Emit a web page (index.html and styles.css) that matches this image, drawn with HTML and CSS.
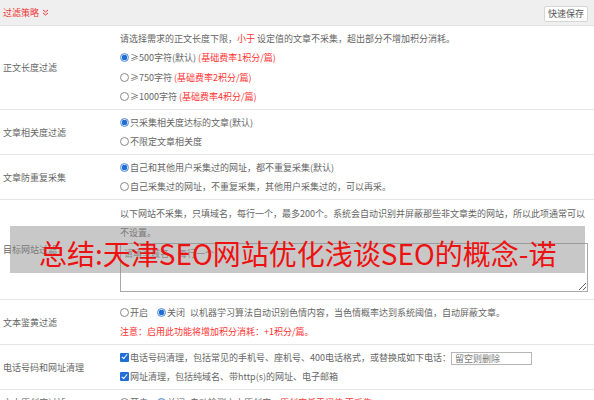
FILE: index.html
```html
<!DOCTYPE html>
<html lang="zh-CN">
<head>
<meta charset="utf-8">
<title>过滤策略</title>
<link rel="stylesheet" href="styles.css">
</head>
<body>
<div class="panel">
  <div class="head">
    <span class="title">过滤策略
      <svg class="chev" width="7" height="7" viewBox="0 0 7 7"><path d="M1 1 L3.5 3 L6 1 M1 4 L3.5 6 L6 4" fill="none" stroke="#e33" stroke-width="1"/></svg>
    </span>
    <button class="save">快速保存</button>
  </div>

  <div class="row">
    <div class="label">正文长度过滤</div>
    <div class="field">
      <div class="line">请选择需求的正文长度下限，<span class="red">小于</span> 设定值的文章不采集，超出部分不增加积分消耗。</div>
      <label class="line"><input type="radio" name="len" checked>≥500字符(默认) <span class="red">(基础费率1积分/篇)</span></label>
      <label class="line"><input type="radio" name="len">≥750字符 <span class="red">(基础费率2积分/篇)</span></label>
      <label class="line"><input type="radio" name="len">≥1000字符 <span class="red">(基础费率4积分/篇)</span></label>
    </div>
  </div>

  <div class="row">
    <div class="label">文章相关度过滤</div>
    <div class="field">
      <label class="line"><input type="radio" name="rel" checked>只采集相关度达标的文章(默认)</label>
      <label class="line"><input type="radio" name="rel">不限定文章相关度</label>
    </div>
  </div>

  <div class="row">
    <div class="label">文章防重复采集</div>
    <div class="field">
      <label class="line"><input type="radio" name="dup" checked>自己和其他用户采集过的网址，都不重复采集(默认)</label>
      <label class="line"><input type="radio" name="dup">自己采集过的网址，不重复采集，其他用户采集过的，可以再采。</label>
    </div>
  </div>

  <div class="row">
    <div class="label">目标网站过滤</div>
    <div class="field">
      <div class="para">以下网站不采集，只填域名，每行一个，最多200个。系统会自动识别并屏蔽那些非文章类的网站，所以此项通常可以不设置。</div>
      <textarea class="area" placeholder="请填写域名，每行一个"></textarea>
    </div>
  </div>

  <div class="row">
    <div class="label">文本鉴黄过滤</div>
    <div class="field">
      <div class="line"><label class="opt"><input type="radio" name="porn">开启</label><label class="opt opt-b"><input type="radio" name="porn" checked>关闭</label>以机器学习算法自动识别色情内容，当色情概率达到系统阈值，自动屏蔽文章。</div>
      <div class="line red">注意：启用此功能将增加积分消耗：+1积分/篇。</div>
    </div>
  </div>

  <div class="row">
    <div class="label">电话号码和网址清理</div>
    <div class="field">
      <label class="line"><input type="checkbox" checked>电话号码清理，包括常见的手机号、座机号、400电话格式，或替换成如下电话：<input class="phone" type="text" placeholder="留空则删除"></label>
      <label class="line"><input type="checkbox" checked>网址清理，包括纯域名、带http(s)的网址、电子邮箱</label>
    </div>
  </div>

  <div class="row">
    <div class="label">文本原创度过滤</div>
    <div class="field">
      <div class="line"><label class="opt"><input type="radio" name="orig">开启</label><label class="opt opt-b"><input type="radio" name="orig" checked>关闭</label>自动检测文本原创度，<span class="red">原创度低于阈值</span> <span class="red">不采集</span></div>
    </div>
  </div>

  <div class="banner">总结:天津SEO网站优化浅谈SEO的概念-诺</div>
</div>
</body>
</html>
```

FILE: styles.css
```css
html, body {
  margin: 0;
  padding: 0;
  background: #fff;
}

.panel {
  position: relative;
  width: 594px;
  font-family: "Noto Sans CJK SC", "Microsoft YaHei", sans-serif;
  font-size: 9px;
  color: #666;
}

.head {
  height: 25px;
  background: #efefef;
  border-bottom: 1px solid #e2e2e2;
  display: flex;
  align-items: center;
  justify-content: space-between;
  padding: 0 6px 0 3px;
}

.title {
  color: #e33;
  display: flex;
  align-items: center;
  gap: 3px;
}

.save {
  font-family: inherit;
  font-size: 9px;
  color: #555;
  background: #fff;
  border: 1px solid #d6d6d6;
  border-radius: 2px;
  height: 16px;
  width: 44px;
  padding: 0;
  margin-top: 2px;
}

.row {
  display: flex;
  padding: 2.5px 0;
  border-bottom: 1px solid #e6e6e6;
}

.label {
  flex: 0 0 117px;
  padding-left: 3px;
  align-self: center;
  color: #666;
}

.field {
  flex: 1;
  padding-right: 6px;
}

.line {
  display: block;
  line-height: 19.5px;
  white-space: nowrap;
}

.para {
  line-height: 19.5px;
  padding-top: 1px;
}

.red {
  color: #f33;
}

.opt {
  margin-right: 9px;
}

.opt-b {
  margin-right: 5px;
}

input[type="radio"] {
  appearance: none;
  -webkit-appearance: none;
  width: 9px;
  height: 9px;
  margin: 0 1px 0 0;
  border: 1px solid #8a8a8a;
  border-radius: 50%;
  background: #fff;
  vertical-align: -1px;
  box-sizing: border-box;
}

input[type="radio"]:checked {
  border-color: #5b8fd8;
  background: radial-gradient(circle, #1f6fd6 0 2.6px, #cfe0f6 3px);
}

input[type="checkbox"] {
  appearance: none;
  -webkit-appearance: none;
  width: 9px;
  height: 9px;
  margin: 0 1px 0 0;
  border-radius: 1px;
  box-sizing: border-box;
  vertical-align: -1px;
  background: #1f6fd6;
  position: relative;
}

input[type="checkbox"]:checked::after {
  content: "";
  position: absolute;
  left: 2.6px;
  top: 0.6px;
  width: 2.4px;
  height: 5px;
  border: solid #fff;
  border-width: 0 1.4px 1.4px 0;
  transform: rotate(40deg);
}

.phone {
  width: 81px;
  height: 13px;
  box-sizing: border-box;
  border: 1px solid #b5b5b5;
  padding: 0 3px;
  font-family: inherit;
  font-size: 9px;
  vertical-align: middle;
  margin: 0;
}

.phone::placeholder {
  color: #777;
}

.area {
  display: block;
  width: 100%;
  height: 49px;
  box-sizing: border-box;
  border: 1px solid #a9a9a9;
  margin: 0 0 5px 0;
  padding: 3px;
  font-family: inherit;
  font-size: 9px;
  resize: vertical;
}

.area::placeholder {
  color: #888;
}

.banner {
  position: absolute;
  left: 10px;
  top: 226px;
  width: 575px;
  height: 47px;
  box-sizing: border-box;
  padding-left: 29px;
  background: rgba(140, 140, 140, 0.48);
  color: #ee1111;
  font-size: 28px;
  line-height: 54px;
  white-space: nowrap;
  overflow: hidden;
}
```
